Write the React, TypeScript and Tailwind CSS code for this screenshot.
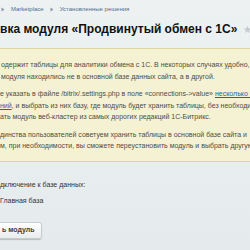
import React from "react";

const Arrow = () => (
  <svg width="4" height="5" viewBox="0 0 4 5" className="shrink-0">
    <path d="M0.5 0.5 L3.5 2.5 L0.5 4.5 Z" fill="#8a98a6" />
  </svg>
);

export default function App() {
  return (
    <div className="w-[250px] h-[250px] overflow-hidden bg-gradient-to-b from-[#edf1f2] to-[#e5ebed] font-['Liberation_Sans',Arial,sans-serif] relative">
      <div className="flex items-center h-[18px] pl-[1px] text-[6px] text-[#4f6e8f] whitespace-nowrap">
        <Arrow />
        <span className="ml-[6px]">Marketplace</span>
        <span className="ml-[6px]"><Arrow /></span>
        <span className="ml-[6px]">Установленные решения</span>
      </div>
      <div className="flex items-center h-[20px] mt-[1px] whitespace-nowrap">
        <h1 className="text-[12px] font-bold text-[#111] leading-none">вка модуля «Продвинутый обмен с 1С»</h1>
        <svg width="9" height="9" viewBox="0 0 10 10" className="ml-[6px] shrink-0">
          <path d="M5 0.8 L6.2 3.7 L9.3 3.9 L6.9 5.9 L7.7 9 L5 7.3 L2.3 9 L3.1 5.9 L0.7 3.9 L3.8 3.7 Z" fill="#c5ccd1" />
        </svg>
      </div>
      <div className="mt-[9px] bg-[#f5f2d4] border-y border-[#ddd5a2] pt-[10px] pb-[9px] text-[7px] leading-[11.5px] text-[#4d4d45] whitespace-nowrap">
        <div className="pl-[1px]">
          <div>одержит таблицы для аналитики обмена с 1С. В некоторых случаях удобно, чтобы</div>
          <div>модуля находились не в основной базе данных сайта, а в другой.</div>
        </div>
        <div className="mt-[6px]">
          <div>
            е указать в файле /bitrix/.settings.php в поле «connections-&gt;value»{" "}
            <span className="text-[#2266aa] underline">несколько подключе</span>
          </div>
          <div>
            <span className="text-[#2266aa] underline">ний</span>, и выбрать из них базу, где модуль будет хранить таблицы, без необходимости
          </div>
          <div>ать модуль веб-кластер из самых дорогих редакций 1С-Битрикс.</div>
        </div>
        <div className="mt-[6px]">
          <div>динства пользователей советуем хранить таблицы в основной базе сайта и</div>
          <div>м, при необходимости, вы сможете переустановить модуль и выбрать другую</div>
        </div>
      </div>
      <div className="mt-[17px] text-[7px] leading-[11px] text-[#333] whitespace-nowrap">
        <div>дключение к базе данных:</div>
        <div className="mt-[5px]">Главная база</div>
      </div>
      <div className="mt-[16px] flex">
        <button className="-ml-[20px] h-[17px] pl-[21px] pr-[6px] rounded-[3px] border border-[#c8cdd0] bg-gradient-to-b from-[#ffffff] to-[#e9eced] shadow-[0_1px_1px_rgba(0,0,0,0.2)] text-[7px] font-bold text-[#3c3c3c] whitespace-nowrap">
          ь модуль
        </button>
      </div>
    </div>
  );
}
